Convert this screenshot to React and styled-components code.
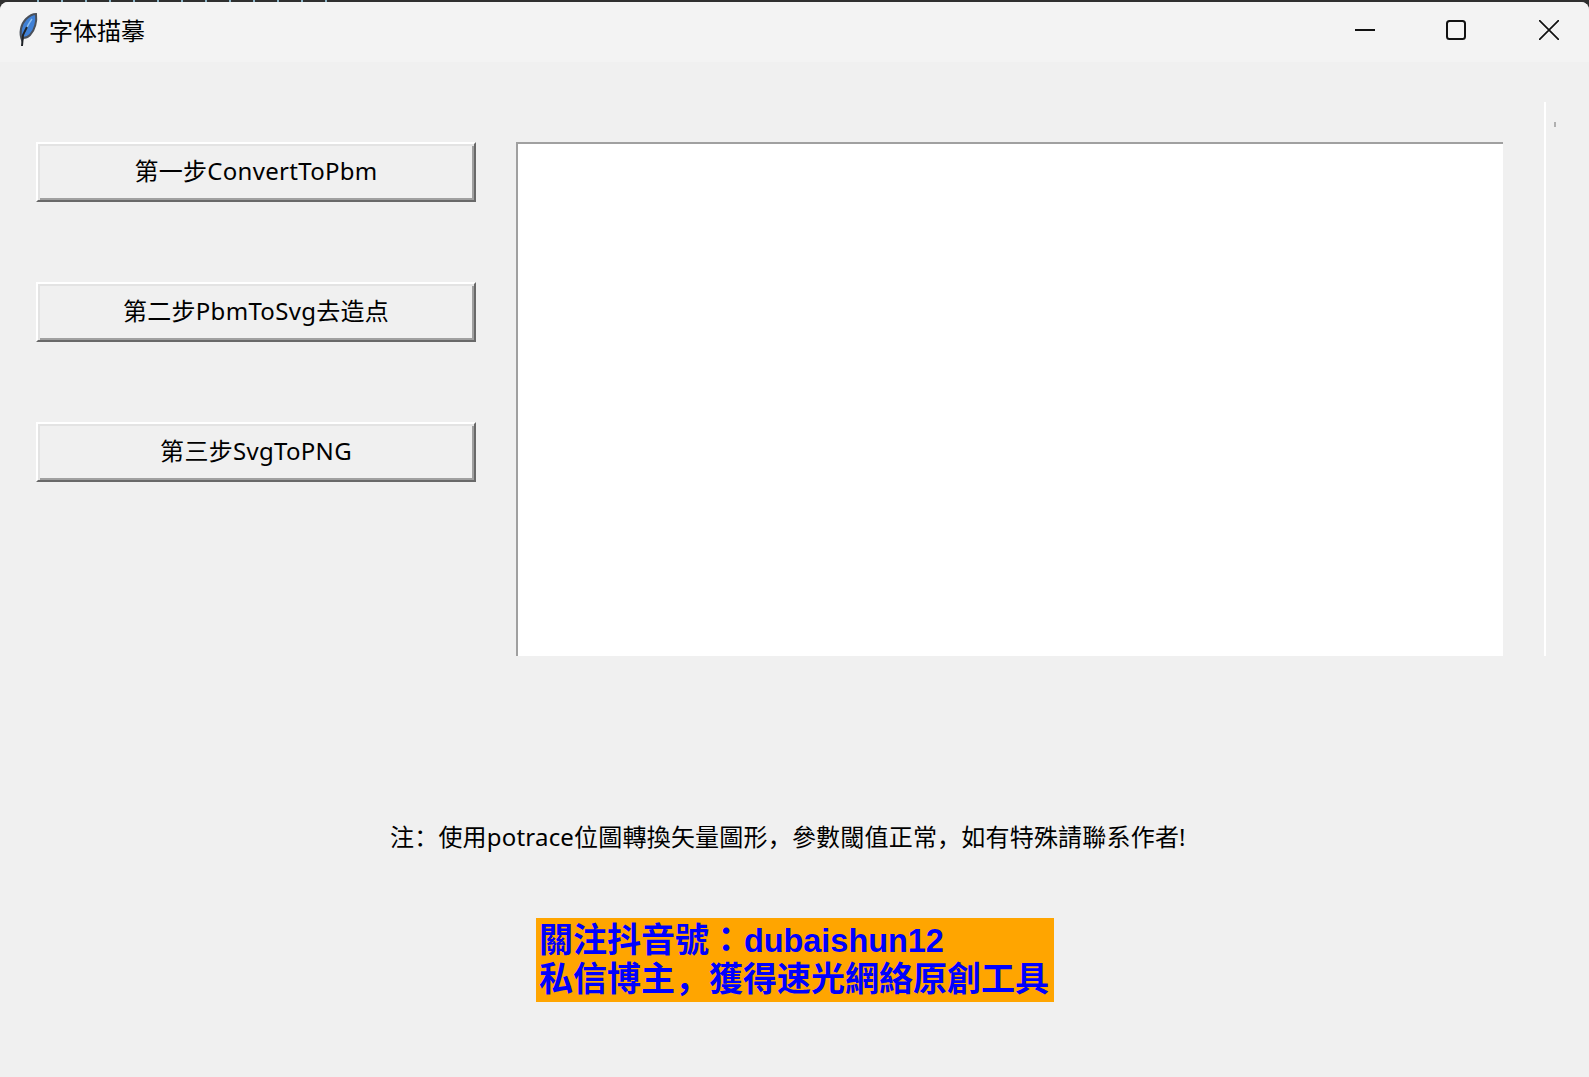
import React from 'react'
import styled, { createGlobalStyle } from 'styled-components'

const GlobalStyle = createGlobalStyle`
  html, body {
    margin: 0;
    padding: 0;
    background: repeating-linear-gradient(90deg, #2f2f2f 0 22px, #8fb7c9 22px 24px) no-repeat 15px 0 / 330px 2px, #2f2f2f;
  }
  body {
    font-family: "Noto Sans", "Noto Sans CJK SC", sans-serif;
  }
`

function Feather() {
  return (
    <svg width="22" height="34" viewBox="0 0 22 34">
      <path d="M6 27 C3 20 5 11 10 6 C13 3 16 1 20 1 C21 8 19 17 14 22 C12 24 9 25 7 25 Z" fill="#3f80d6" stroke="#4a505a" strokeWidth="2" />
      <path d="M8 21 C10 16 13 10 16 6" fill="none" stroke="#8fc0f0" strokeWidth="1.4" />
      <path d="M6 33 L7 22 L11 14" fill="none" stroke="#1e2126" strokeWidth="2" />
    </svg>
  )
}

function App() {
  return (
    <>
      <GlobalStyle />
      <Window>
        <TitleBar>
          <TitleLeft>
            <Feather />
            <TitleText>字体描摹</TitleText>
          </TitleLeft>
          <Controls>
            <Control>
              <svg width="20" height="20" viewBox="0 0 20 20"><path d="M0 10H20" stroke="#111" strokeWidth="2" /></svg>
            </Control>
            <Control>
              <svg width="20" height="20" viewBox="0 0 20 20"><rect x="1" y="1" width="18" height="18" rx="2.5" fill="none" stroke="#111" strokeWidth="2" /></svg>
            </Control>
            <Control>
              <svg width="20" height="20" viewBox="0 0 20 20"><path d="M0 0L20 20M20 0L0 20" stroke="#111" strokeWidth="1.7" /></svg>
            </Control>
          </Controls>
        </TitleBar>
        <Content>
          <Workspace>
            <ButtonColumn>
              <StepButton>第一步ConvertToPbm</StepButton>
              <StepButton>第二步PbmToSvg去造点</StepButton>
              <StepButton>第三步SvgToPNG</StepButton>
            </ButtonColumn>
            <Preview />
            <ScrollTrack>
              <ScrollDot />
            </ScrollTrack>
          </Workspace>
          <Note>注：使用potrace位圖轉換矢量圖形，參數閾值正常，如有特殊請聯系作者!</Note>
          <BannerRow>
            <Banner>
              <BannerLine $cjk="Noto Sans CJK TC">關注抖音號：<BannerLatin>dubaishun12</BannerLatin></BannerLine>
              <BannerLine $cjk="Noto Sans CJK SC">私信博主，獲得速光網絡原創工具</BannerLine>
            </Banner>
          </BannerRow>
        </Content>
      </Window>
    </>
  )
}

export default App

const Window = styled.div`
  width: 1589px;
  height: 1075px;
  margin-top: 2px;
  background: #f0f0f0;
  border-radius: 8px 8px 0 0;
  overflow: hidden;
  display: flex;
  flex-direction: column;
`

const TitleBar = styled.div`
  height: 60px;
  flex: none;
  box-sizing: border-box;
  background: #f3f3f3;
  display: flex;
  align-items: center;
  justify-content: space-between;
  padding: 0 30px 4px 16px;
`

const TitleLeft = styled.div`
  display: flex;
  align-items: center;
  gap: 11px;
`

const TitleText = styled.span`
  font-size: 24px;
  color: #000;
  margin-bottom: 2px;
`

const Controls = styled.div`
  display: flex;
  gap: 71px;
`

const Control = styled.div`
  width: 20px;
  height: 20px;
  display: flex;

  &:last-child {
    margin-left: 2px;
  }
`

const Content = styled.div`
  flex: 1;
  display: flex;
  flex-direction: column;
`

const Workspace = styled.div`
  display: flex;
  align-items: flex-start;
  padding: 40px 0 0 36px;
  height: 594px;
  box-sizing: border-box;
`

const ButtonColumn = styled.div`
  display: flex;
  flex-direction: column;
  gap: 80px;
  width: 440px;
  margin-top: 40px;
  flex: none;
`

const StepButton = styled.button`
  height: 60px;
  width: 100%;
  padding: 0 0 6px;
  background: #f0f0f0;
  color: #000;
  font-family: inherit;
  font-size: 24px;
  letter-spacing: 0.3px;
  border-style: solid;
  border-width: 2px;
  border-color: #fff #696969 #696969 #fff;
  box-shadow: inset 2px 2px 0 #e3e3e3, inset -2px -2px 0 #a0a0a0;
`

const Preview = styled.div`
  width: 987px;
  height: 514px;
  margin: 40px 0 0 40px;
  flex: none;
  box-sizing: border-box;
  background: #fff;
  border-top: 2px solid #a0a0a0;
  border-left: 2px solid #a0a0a0;
`

const ScrollTrack = styled.div`
  width: 2px;
  height: 554px;
  margin-left: 41px;
  flex: none;
  background: #fff;
  position: relative;
`

const ScrollDot = styled.span`
  position: absolute;
  left: 10px;
  top: 20px;
  width: 2px;
  height: 5px;
  background: #b0b0b0;
`

const Note = styled.div`
  margin: 164px 0 0 390px;
  font-size: 24px;
  line-height: 34px;
  letter-spacing: 0.2px;
  color: #000;
`

const BannerRow = styled.div`
  display: flex;
  margin: 64px 0 0 536px;
`

const Banner = styled.div`
  width: 518px;
  height: 84px;
  box-sizing: border-box;
  padding: 3px 3px;
  background: #ffa500;
  color: #0000ff;
  font-size: 34px;
  font-weight: 700;
  line-height: 38px;
  white-space: nowrap;
`

const BannerLine = styled.div`
  font-family: "Liberation Sans", "${props => props.$cjk}", sans-serif;
`

const BannerLatin = styled.span`
  font-size: 32.4px;
  margin-left: 1px;
`
